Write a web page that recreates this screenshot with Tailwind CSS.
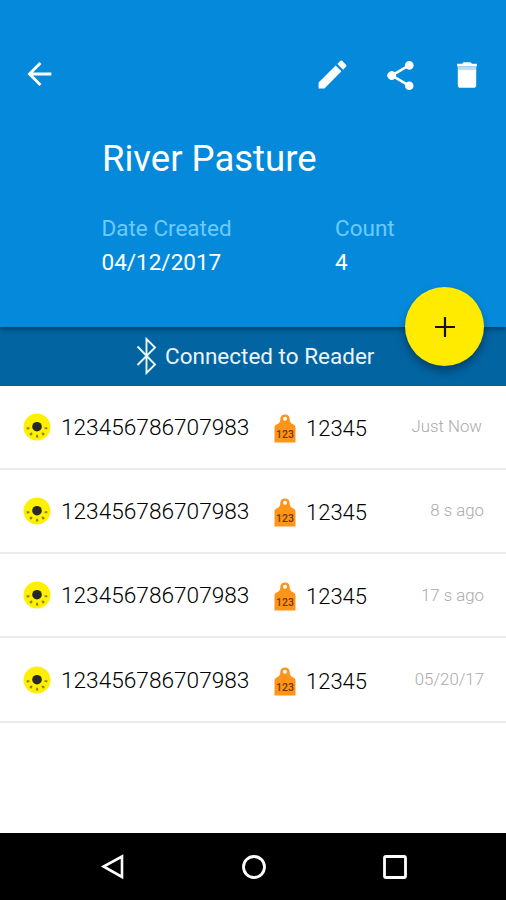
<!DOCTYPE html>
<html lang="en">
<head>
<meta charset="utf-8">
<title>River Pasture</title>
<script src="https://cdn.jsdelivr.net/npm/@tailwindcss/browser@4"></script>
</head>
<body class="bg-white">
<svg class="hidden">
  <symbol id="eid" viewBox="0 0 28 28">
    <circle cx="14" cy="14" r="13.5" fill="#fff000"/>
    <circle cx="14" cy="13.7" r="4.8" fill="#26282e"/>
    <path d="M5 14.200a9 9 0 0 0 18 0" fill="none" stroke="#8b8518" stroke-width="2.800" stroke-dasharray="2.200 4.320"/>
  </symbol>
  <symbol id="tag" viewBox="0 0 22 29">
    <path fill="#ff9518" fill-rule="evenodd" d="M11 .5c3 0 4.700 2 4.700 4.500 0 3 .8 4.200 3.300 5.300 1.900.9 2.500 2 2.500 3.700v14.500H.5V14c0-1.700.6-2.800 2.500-3.700C5.500 9.200 6.300 8 6.300 5 6.300 2.500 8 .5 11 .5Zm0 2.300a2 2 0 1 0 0 4 2 2 0 0 0 0-4Z"/>
    <text x="11" y="24.200" text-anchor="middle" font-family="Roboto, sans-serif" font-size="10.500" font-weight="500" fill="#713400">123</text>
  </symbol>
</svg>
<div class="flex h-[900px] w-[506px] flex-col overflow-hidden bg-white font-[Roboto,sans-serif]">
  <header class="relative z-10 h-[327px] shrink-0 bg-[#058adb] text-white shadow-[0_2px_5px_rgba(0,0,0,0.4)]">
    <div class="flex h-[148px] items-center pl-[23px] pr-[22px]">
      <svg class="mr-auto size-[34px]" viewBox="0 0 24 24" fill="none" stroke="currentColor" stroke-width="2"><path d="M20 12H5.500M12.300 4.300 4.600 12l7.700 7.700"/></svg>
      <svg class="mr-[32px] size-[37px]" viewBox="0 0 24 24" fill="currentColor"><path d="M3 17.250V21h3.750L17.810 9.940l-3.750-3.750L3 17.250zM20.710 7.040a1 1 0 0 0 0-1.410l-2.340-2.340a1 1 0 0 0-1.410 0l-1.830 1.830 3.750 3.750 1.830-1.830z"/></svg>
      <svg class="mr-[32px] mt-[2px] size-[35px]" viewBox="0 0 24 24" fill="currentColor"><path d="M18 16.080c-.76 0-1.440.3-1.960.77L8.910 12.700c.05-.23.09-.46.09-.7s-.04-.47-.09-.7l7.050-4.110c.54.5 1.250.81 2.040.81a3 3 0 1 0-3-3c0 .24.04.47.09.7L8.040 9.810A3 3 0 1 0 8.040 14.190l7.120 4.160c-.05.21-.08.43-.08.650A2.920 2.920 0 1 0 18 16.080z"/></svg>
      <svg class="mt-[2px] size-[34px]" viewBox="0 0 24 24" fill="currentColor"><path d="M5.500 8h13v11a2 2 0 0 1-2 2h-9a2 2 0 0 1-2-2z"/><path d="M19 4h-3.500l-1-1h-5l-1 1H5v2h14z"/><path d="M5.500 6h13v2h-13z" fill="#b9dcf7"/></svg>
    </div>
    <h1 class="-mt-[11px] pl-[102px] text-[36.500px] leading-[44px]">River Pasture</h1>
    <div class="mt-[30px] flex pl-[101.500px] text-[22.500px] leading-[34px]">
      <div class="w-[233.500px]"><div class="text-[#6dcaff]">Date Created</div><div>04/12/2017</div></div>
      <div><div class="text-[#6dcaff]">Count</div><div>4</div></div>
    </div>
    <button class="absolute left-[405px] top-[287px] flex size-[79px] items-center justify-center rounded-full bg-[#ffeb00] shadow-[0_5px_8px_rgba(0,0,0,0.35)]">
      <svg class="size-[20px]" viewBox="0 0 20 20" stroke="#111" stroke-width="2.200"><path d="M10 0v20M0 10h20"/></svg>
    </button>
  </header>
  <div class="flex h-[58.500px] shrink-0 items-center bg-[#0264a1] pl-[136px] text-[22.500px] text-[#e9f5ff]">
    <svg class="mr-[8px] h-[38px] w-[21px]" viewBox="0 0 21 38" fill="none" stroke="currentColor" stroke-width="1.900"><path d="M1.500 9.500 19 27.500 10.500 36V2l8.500 8.500L1.500 28"/></svg>
    <span class="mt-[1px]">Connected to Reader</span>
  </div>
  <main class="flex-1 font-light text-black">
    <div class="flex h-[84.300px] items-center border-b-2 border-[#ebebeb] pl-[22.500px] pr-[24px]">
      <svg class="mr-[10.500px] size-[28px]"><use href="#eid"/></svg><span class="mt-[2px] w-[213px] text-[22.650px]">123456786707983</span>
      <svg class="mr-[10px] mt-[3px] h-[29px] w-[22px]"><use href="#tag"/></svg><span class="mt-[3px] text-[22px]">12345</span><span class="ml-auto text-[16.800px] text-[#aaa]">Just Now</span>
    </div>
    <div class="flex h-[84.300px] items-center border-b-2 border-[#ebebeb] pl-[22.500px] pr-[22px]">
      <svg class="mr-[10.500px] size-[28px]"><use href="#eid"/></svg><span class="mt-[2px] w-[213px] text-[22.650px]">123456786707983</span>
      <svg class="mr-[10px] mt-[3px] h-[29px] w-[22px]"><use href="#tag"/></svg><span class="mt-[3px] text-[22px]">12345</span><span class="ml-auto text-[16.800px] text-[#aaa]">8 s ago</span>
    </div>
    <div class="flex h-[84.300px] items-center border-b-2 border-[#ebebeb] pl-[22.500px] pr-[22px]">
      <svg class="mr-[10.500px] size-[28px]"><use href="#eid"/></svg><span class="mt-[2px] w-[213px] text-[22.650px]">123456786707983</span>
      <svg class="mr-[10px] mt-[3px] h-[29px] w-[22px]"><use href="#tag"/></svg><span class="mt-[3px] text-[22px]">12345</span><span class="ml-auto text-[16.800px] text-[#aaa]">17 s ago</span>
    </div>
    <div class="flex h-[84.300px] items-center border-b-2 border-[#ebebeb] pl-[22.500px] pr-[22px]">
      <svg class="mr-[10.500px] size-[28px]"><use href="#eid"/></svg><span class="mt-[2px] w-[213px] text-[22.650px]">123456786707983</span>
      <svg class="mr-[10px] mt-[3px] h-[29px] w-[22px]"><use href="#tag"/></svg><span class="mt-[3px] text-[22px]">12345</span><span class="ml-auto text-[16.800px] text-[#aaa]">05/20/17</span>
    </div>
  </main>
  <nav class="flex h-[67px] shrink-0 items-center justify-between bg-black pl-[100px] pr-[98px] text-white">
    <svg class="size-[26px]" viewBox="0 0 26 26" fill="none" stroke="currentColor" stroke-width="2.600"><path d="M22 2.500v20.500L3.500 12.500z"/></svg>
    <svg class="size-[26px]" viewBox="0 0 26 26" fill="none" stroke="currentColor" stroke-width="2.800"><circle cx="13" cy="13" r="10.500"/></svg>
    <svg class="size-[26px]" viewBox="0 0 26 26" fill="none" stroke="currentColor" stroke-width="2.800"><rect x="2.500" y="2.500" width="21" height="21" rx="1.500"/></svg>
  </nav>
</div>
</body>
</html>
